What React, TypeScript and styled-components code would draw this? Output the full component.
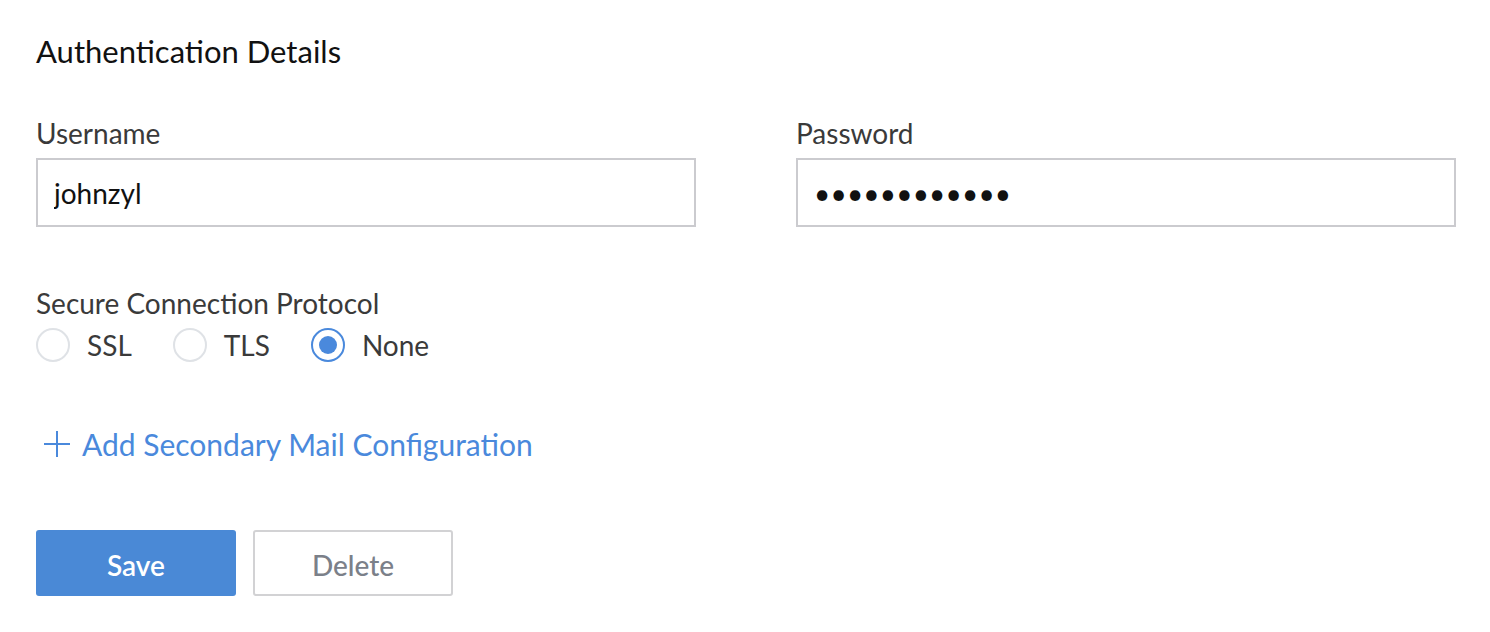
import React from "react";
import styled, { createGlobalStyle } from "styled-components";

const Global = createGlobalStyle`
  html, body { margin: 0; padding: 0; background: #fff; }
  body { font-family: "Lato", "Noto Sans", sans-serif; }
  * { box-sizing: border-box; }
`;

const Page = styled.div`
  padding: 35px 35px 0 36px;
  display: flex;
  flex-direction: column;
`;

const Heading = styled.h2`
  margin: 0;
  font-family: "Lato", sans-serif;
  font-weight: 400;
  font-size: 31px;
  line-height: 32px;
  color: #111;
`;

const FieldRow = styled.div`
  display: grid;
  grid-template-columns: 660px 660px;
  column-gap: 100px;
  margin-top: 51px;
`;

const Field = styled.div`
  display: flex;
  flex-direction: column;
`;

const Label = styled.label`
  font-family: "Lato", sans-serif;
  font-size: 28px;
  line-height: 30px;
  color: #3a3a3a;
  margin-bottom: 10px;
`;

const Input = styled.input`
  height: 69px;
  width: 100%;
  border: 2px solid #cbcbcf;
  border-radius: 0;
  padding: 0 16px;
  font-family: "Lato", sans-serif;
  font-size: 28px;
  color: #111;
  outline: none;
  background: #fff;
`;

const PasswordInput = styled(Input)`
  padding-left: 16px;
  letter-spacing: 0.2px;
  font-size: 28px;
`;

const Group = styled.div`
  display: flex;
  flex-direction: column;
  margin-top: 61px;
`;

const GroupLabel = styled.div`
  font-size: 28px;
  line-height: 30px;
  color: #3a3a3a;
`;

const RadioRow = styled.div`
  display: flex;
  align-items: center;
  margin-top: 10px;
  gap: 41px;
`;

const RadioOption = styled.label`
  display: flex;
  align-items: center;
  gap: 17px;
  font-size: 28px;
  color: #3a3a3a;
  cursor: pointer;
`;

const RadioCircle = styled.span<{ $checked?: boolean }>`
  width: 34px;
  height: 34px;
  border-radius: 50%;
  border: 2px solid ${(p) => (p.$checked ? "#4a89dc" : "#dfe2e6")};
  display: flex;
  align-items: center;
  justify-content: center;
  &::after {
    content: "";
    width: 18px;
    height: 18px;
    border-radius: 50%;
    background: ${(p) => (p.$checked ? "#4a89dc" : "transparent")};
  }
`;

const AddLink = styled.a`
  display: flex;
  align-items: center;
  gap: 12px;
  margin-top: 65px;
  margin-left: 8px;
  font-size: 30px;
  line-height: 34px;
  color: #4a89dc;
  text-decoration: none;
  cursor: pointer;
`;

const Actions = styled.div`
  display: flex;
  gap: 17px;
  margin-top: 69px;
`;

const Button = styled.button<{ $primary?: boolean }>`
  width: 200px;
  height: 66px;
  padding-top: 5px;
  border-radius: 3px;
  font-family: "Lato", sans-serif;
  font-size: 28px;
  font-weight: ${(p) => (p.$primary ? 600 : 500)};
  cursor: pointer;
  background: ${(p) => (p.$primary ? "#4a89d6" : "#fff")};
  color: ${(p) => (p.$primary ? "#fff" : "#7b8089")};
  border: ${(p) => (p.$primary ? "none" : "2px solid #d2d2d4")};
`;

const PlusIcon = () => (
  <svg width="26" height="26" viewBox="0 0 26 26">
    <path d="M13 0V26M0 13H26" stroke="#4a89dc" strokeWidth="2" />
  </svg>
);

export default function App() {
  const options = ["SSL", "TLS", "None"];
  return (
    <>
      <Global />
      <Page>
        <Heading>Authentication Details</Heading>
        <FieldRow>
          <Field>
            <Label>Username</Label>
            <Input defaultValue="johnzyl" readOnly />
          </Field>
          <Field>
            <Label>Password</Label>
            <PasswordInput type="password" defaultValue="abcdefghijkl" readOnly />
          </Field>
        </FieldRow>
        <Group>
          <GroupLabel>Secure Connection Protocol</GroupLabel>
          <RadioRow>
            {options.map((o) => (
              <RadioOption key={o}>
                <RadioCircle $checked={o === "None"} />
                {o}
              </RadioOption>
            ))}
          </RadioRow>
        </Group>
        <AddLink>
          <PlusIcon />
          Add Secondary Mail Configuration
        </AddLink>
        <Actions>
          <Button $primary>Save</Button>
          <Button>Delete</Button>
        </Actions>
      </Page>
    </>
  );
}
